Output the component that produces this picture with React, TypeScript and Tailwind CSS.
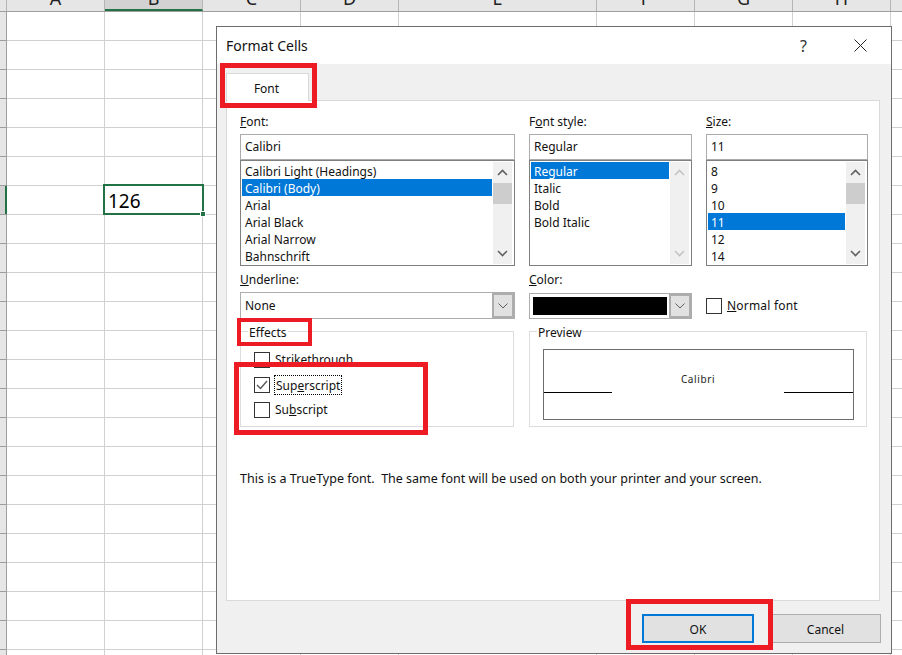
const columns = [
  { name: 'A', width: 'w-[98px]' },
  { name: 'B', width: 'w-[98px]', active: true },
  { name: 'C', width: 'w-[98px]' },
  { name: 'D', width: 'w-[98px]' },
  { name: 'E', width: 'w-[198px]' },
  { name: 'F', width: 'w-[98px]' },
  { name: 'G', width: 'w-[98px]' },
  { name: 'H', width: 'w-[98px]' },
];

const rows = Array.from({ length: 23 }, (_, i) => i);
const SELECTED_ROW = 6;

function Chevron({ up, color }: { up?: boolean; color: string }) {
  return (
    <svg width="11" height="7" viewBox="0 0 11 7" fill="none" stroke={color} strokeWidth="1.6">
      <polyline points={up ? '1,6 5.5,1.5 10,6' : '1,1 5.5,5.5 10,1'} />
    </svg>
  );
}

function ComboChevron() {
  return (
    <svg width="10" height="6" viewBox="0 0 10 6" fill="none" stroke="#606060" strokeWidth="1">
      <polyline points="0.5,0.5 5,5 9.5,0.5" />
    </svg>
  );
}

function Sheet() {
  return (
    <div className="w-[902px]">
      <div className="flex h-[12px] overflow-hidden border-b border-[#9e9e9e] bg-[#e6e6e6]">
        <div className="w-[7px] shrink-0 border-r border-[#b5b5b5]" />
        {columns.map(col => (
          <div
            key={col.name}
            className={`${col.width} shrink-0 border-r border-[#b5b5b5] text-center text-[18px] leading-[18px] text-[#222] ${
              col.active ? 'border-b-2 border-b-[#217346] bg-[#d2d2d2] text-[#1f5c3a]' : ''
            }`}
          >
            <div className="-mt-[11px]">{col.name}</div>
          </div>
        ))}
      </div>
      {rows.map(row => (
        <div key={row} className="flex h-[29px] border-b border-[#d0d0d0]">
          <div
            className={`relative w-[7px] shrink-0 border-r border-[#9e9e9e] ${
              row === SELECTED_ROW ? 'border-r-2 border-r-[#217346] bg-[#d2d2d2]' : 'bg-[#e6e6e6]'
            }`}
          >
            <div className="absolute bottom-[-1px] left-0 h-px w-[7px] bg-[#9e9e9e]" />
          </div>
          {columns.map(col => (
            <div key={col.name} className={`${col.width} shrink-0 border-r border-[#d0d0d0]`} />
          ))}
        </div>
      ))}
    </div>
  );
}

function ActiveCell() {
  return (
    <div className="absolute left-[103px] top-[184px] h-[31px] w-[101px] border-2 border-[#217346] bg-white pl-[3px] text-[19px] leading-[31px] text-black">
      126
      <div className="absolute bottom-[-4px] right-[-4px] h-[6px] w-[6px] border border-white bg-[#217346]" />
    </div>
  );
}

function ListBox({
  items,
  selected,
  muted,
  thumb,
}: {
  items: string[];
  selected: string;
  muted?: boolean;
  thumb: boolean;
}) {
  return (
    <div className="flex h-[106px] gap-px overflow-hidden border border-[#7f7f7f] p-px pr-[2px]">
      <div className="min-w-0 flex-1 overflow-hidden">
        {items.map(item => (
          <div
            key={item}
            className={`h-[17px] pl-[3px] leading-[19px] ${item === selected ? 'bg-[#0078d7] text-white' : ''}`}
          >
            {item}
          </div>
        ))}
      </div>
      <div className="flex w-[19px] shrink-0 flex-col items-center bg-[#f0f0f0]">
        <div className="flex h-[21px] items-center justify-center">
          <Chevron up color={muted ? '#c4c4c4' : '#606060'} />
        </div>
        <div className={`h-[21px] w-full ${thumb ? 'bg-[#cdcdcd]' : ''}`} />
        <div className="flex-1" />
        <div className="flex h-[21px] items-center justify-center">
          <Chevron color={muted ? '#c4c4c4' : '#606060'} />
        </div>
      </div>
    </div>
  );
}

function Field({ value }: { value: string }) {
  return <div className="h-[26px] border border-[#ababab] pl-[4px] leading-[24px]">{value}</div>;
}

function Label({ pre, hot, post }: { pre?: string; hot: string; post: string }) {
  return (
    <div className="h-[20px] leading-[16px]">
      {pre}
      <u>{hot}</u>
      {post}
    </div>
  );
}

function CheckBox({ checked }: { checked?: boolean }) {
  return (
    <div className="flex h-[16px] w-[16px] shrink-0 items-center justify-center border border-[#333] bg-white">
      {checked && (
        <svg width="12" height="10" viewBox="0 0 12 10" fill="none" stroke="#555" strokeWidth="1.4">
          <polyline points="1,5 4.5,8.5 11,1" />
        </svg>
      )}
    </div>
  );
}

function FontTab() {
  return (
    <div className="grid grid-cols-[275px_163px_162px] gap-x-[14px]">
      <div>
        <Label hot="F" post="ont:" />
        <Field value="Calibri" />
        <ListBox
          thumb
          selected="Calibri (Body)"
          items={['Calibri Light (Headings)', 'Calibri (Body)', 'Arial', 'Arial Black', 'Arial Narrow', 'Bahnschrift']}
        />
      </div>
      <div>
        <Label pre="F" hot="o" post="nt style:" />
        <Field value="Regular" />
        <ListBox muted thumb={false} selected="Regular" items={['Regular', 'Italic', 'Bold', 'Bold Italic']} />
      </div>
      <div>
        <Label hot="S" post="ize:" />
        <Field value="11" />
        <ListBox thumb selected="11" items={['8', '9', '10', '11', '12', '14']} />
      </div>

      <div className="mt-[6px]">
        <Label hot="U" post="nderline:" />
        <div className="flex h-[27px] border border-[#adadad]">
          <div className="flex-1 pl-[4px] leading-[25px]">None</div>
          <div className="flex w-[22px] items-center justify-center border-2 border-[#adadad] bg-[#e1e1e1]">
            <ComboChevron />
          </div>
        </div>
      </div>
      <div className="mt-[6px]">
        <Label hot="C" post="olor:" />
        <div className="mt-px flex h-[26px] border border-[#adadad]">
          <div className="flex-1 py-[3px] pl-[3px] pr-[2px]">
            <div className="h-[18px] bg-black" />
          </div>
          <div className="flex w-[22px] items-center justify-center border-2 border-[#adadad] bg-[#e1e1e1]">
            <ComboChevron />
          </div>
        </div>
      </div>
      <div className="mt-[26px] flex h-[27px] items-center gap-[5px]">
        <CheckBox />
        <div className="tracking-[0.2px]">
          <u>N</u>ormal font
        </div>
      </div>

      <div className="relative mt-[12px] h-[96px] w-[274px] border border-[#dcdcdc] pl-[13px] pt-[15px]">
        <div className="absolute -top-[8px] left-[7px] bg-white px-px">Effects</div>
        <div className="flex h-[25px] items-center gap-[5px]">
          <CheckBox />
          <div className="pt-px">
            <u>S</u>trikethrough
          </div>
        </div>
        <div className="flex h-[25px] items-center gap-[4px]">
          <CheckBox checked />
          <div className="border border-dotted border-black px-px pt-px leading-[17px]">
            Sup<u>e</u>rscript
          </div>
        </div>
        <div className="flex h-[25px] items-center gap-[5px]">
          <CheckBox />
          <div className="pt-px">
            Su<u>b</u>script
          </div>
        </div>
      </div>
      <div className="relative col-span-2 mt-[12px] h-[96px] w-[338px] border border-[#dcdcdc] px-[13px] pt-[17px]">
        <div className="absolute -top-[8px] left-[7px] bg-white px-px">Preview</div>
        <div className="flex h-[71px] w-[311px] border border-[#6d6d6d]">
          <div className="mt-[42px] h-px w-[68px] bg-black" />
          <div className="flex-1 pt-[21px] text-center text-[10px] leading-[16px] tracking-[0.6px] text-[#222]">
            Calibri
          </div>
          <div className="mt-[42px] h-px w-[69px] bg-black" />
        </div>
      </div>

      <div className="col-span-3 mt-[44px] whitespace-pre text-[12.5px] leading-[16px]">
        This is a TrueType font.  The same font will be used on both your printer and your screen.
      </div>
    </div>
  );
}

function Dialog() {
  return (
    <div className="absolute left-[216px] top-[26px] flex h-[628px] w-[676px] flex-col border border-[#6d6d6d] bg-[#f0f0f0] text-[12px] text-[#111]">
      <div className="flex h-[37px] shrink-0 items-center bg-white pl-[9px] pr-[24px]">
        <div className="text-[14px]">Format Cells</div>
        <div className="ml-auto text-[16px] text-[#333]">?</div>
        <svg className="ml-[47px]" width="13" height="13" viewBox="0 0 13 13" fill="none" stroke="#222" strokeWidth="1">
          <path d="M0.5 0.5 12.5 12.5M12.5 0.5 0.5 12.5" />
        </svg>
      </div>
      <div className="ml-[9px] mt-[9px] flex">
        <div className="relative z-10 -mb-px h-[28px] w-[83px] border border-b-0 border-[#d9d9d9] bg-white pr-[2px] text-center leading-[30px]">
          Font
        </div>
      </div>
      <div className="ml-[9px] h-[501px] w-[654px] border border-[#d9d9d9] bg-white pl-[13px] pt-[13px]">
        <FontTab />
      </div>
      <div className="ml-[9px] mt-[13px] flex w-[655px] justify-end gap-[16px]">
        <button className="h-[29px] w-[112px] border-2 border-[#0078d7] bg-[#e1e1e1] pt-[2px]">OK</button>
        <button className="h-[29px] w-[111px] border border-[#adadad] bg-[#e1e1e1] pt-[2px]">Cancel</button>
      </div>
    </div>
  );
}

export default function App() {
  return (
    <div className="relative h-[655px] w-[902px] overflow-hidden bg-white font-['Noto_Sans',sans-serif]">
      <Sheet />
      <ActiveCell />
      <Dialog />
      {/* red annotation boxes */}
      <div className="absolute left-[220px] top-[63px] h-[45px] w-[97px] border-[5px] border-[#ed1c24]" />
      <div className="absolute left-[237px] top-[318px] h-[28px] w-[75px] border-[4px] border-[#ed1c24]" />
      <div className="absolute left-[234px] top-[362px] h-[73px] w-[194px] border-[5px] border-[#ed1c24]" />
      <div className="absolute left-[626px] top-[599px] h-[51px] w-[147px] border-[5px] border-[#ed1c24]" />
    </div>
  );
}
